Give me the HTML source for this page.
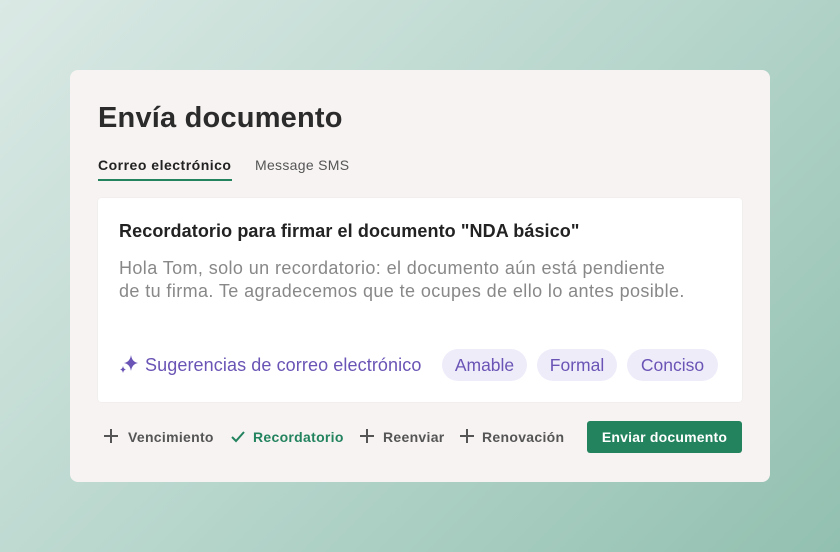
<!DOCTYPE html>
<html><head><meta charset="utf-8"><style>
*{margin:0;padding:0;box-sizing:border-box}
body{width:840px;height:552px;overflow:hidden;font-family:"Liberation Sans",sans-serif;background:linear-gradient(135deg,#dbe9e5 0%,#b7d6cc 50%,#92c0b0 100%);position:relative}
.card{position:absolute;left:70px;top:70px;width:700px;height:412px;background:#f7f3f2;border-radius:8px}
.abs{position:absolute;white-space:nowrap}
h1{position:absolute;left:28px;top:32px;font-size:29px;font-weight:bold;color:#2b2b2b;letter-spacing:0.2px}
.t1{left:28px;top:87px;font-size:14px;font-weight:bold;color:#222;letter-spacing:0.5px}
.ul{position:absolute;left:28px;top:109px;width:134px;height:2px;background:#23835f}
.t2{left:185px;top:87px;font-size:14px;color:#555;letter-spacing:0.3px}
.box{position:absolute;left:28px;top:128px;width:644px;height:204px;background:#fff;border-radius:3px;box-shadow:0 0 1px rgba(0,0,0,.12)}
.subj{left:21px;top:23px;font-size:18px;font-weight:bold;color:#222;letter-spacing:0.1px}
.body{left:21px;top:59px;font-size:18px;color:#888;line-height:23px;white-space:normal;width:620px;letter-spacing:0.4px}
.sug{left:21px;top:156px;font-size:18px;color:#6a54b5;letter-spacing:0.1px}
.pill{position:absolute;top:151px;height:32px;border-radius:16px;background:#efecfa;color:#6a54b5;font-size:17.5px;line-height:32px;text-align:center}
.f{top:359px;font-size:14px;font-weight:bold;color:#555;letter-spacing:0.3px}
.pl{position:absolute;top:359px;width:14px;height:14px}
.pl:before{content:"";position:absolute;left:0;top:6px;width:14px;height:2px;background:#555}
.pl:after{content:"";position:absolute;left:6px;top:0;width:2px;height:14px;background:#555}
.btn{position:absolute;left:517px;top:351px;width:155px;height:32px;background:#23835f;border-radius:3px;color:#fff;font-size:14px;font-weight:bold;text-align:center;line-height:32px;letter-spacing:0.2px}
</style></head><body>
<div class="card">
<h1>Envía documento</h1>
<div class="abs t1">Correo electrónico</div><div class="ul"></div>
<div class="abs t2">Message SMS</div>
<div class="box">
<div class="abs subj">Recordatorio para firmar el documento "NDA básico"</div>
<div class="abs body">Hola Tom, solo un recordatorio: el documento aún está pendiente<br>de tu firma. Te agradecemos que te ocupes de ello lo antes posible.</div>
<div class="abs sug"><svg width="20" height="20" viewBox="0 0 20 20" style="vertical-align:-3px;margin-right:6px"><path d="M12 1 Q13 8 19 9 Q13 10 12 17 Q11 10 5 9 Q11 8 12 1Z" fill="#6a54b5"/><path d="M4 12 Q4.5 15 7 15.5 Q4.5 16 4 19 Q3.5 16 1 15.5 Q3.5 15 4 12Z" fill="#6a54b5"/></svg>Sugerencias de correo electrónico</div>
<div class="pill" style="left:344px;width:85px">Amable</div>
<div class="pill" style="left:439px;width:80px">Formal</div>
<div class="pill" style="left:529px;width:91px">Conciso</div>
</div>
<div class="pl" style="left:34px"></div>
<div class="abs f" style="left:58px">Vencimiento</div>
<svg class="abs" style="left:161px;top:361px" width="14" height="12" viewBox="0 0 14 12"><path d="M1 6 L5 10 L13 1" stroke="#23835f" stroke-width="2" fill="none"/></svg>
<div class="abs f" style="left:183px;color:#23835f">Recordatorio</div>
<div class="pl" style="left:290px"></div>
<div class="abs f" style="left:313px">Reenviar</div>
<div class="pl" style="left:390px"></div>
<div class="abs f" style="left:412px">Renovación</div>
<div class="btn">Enviar documento</div>
</div>
</body></html>
